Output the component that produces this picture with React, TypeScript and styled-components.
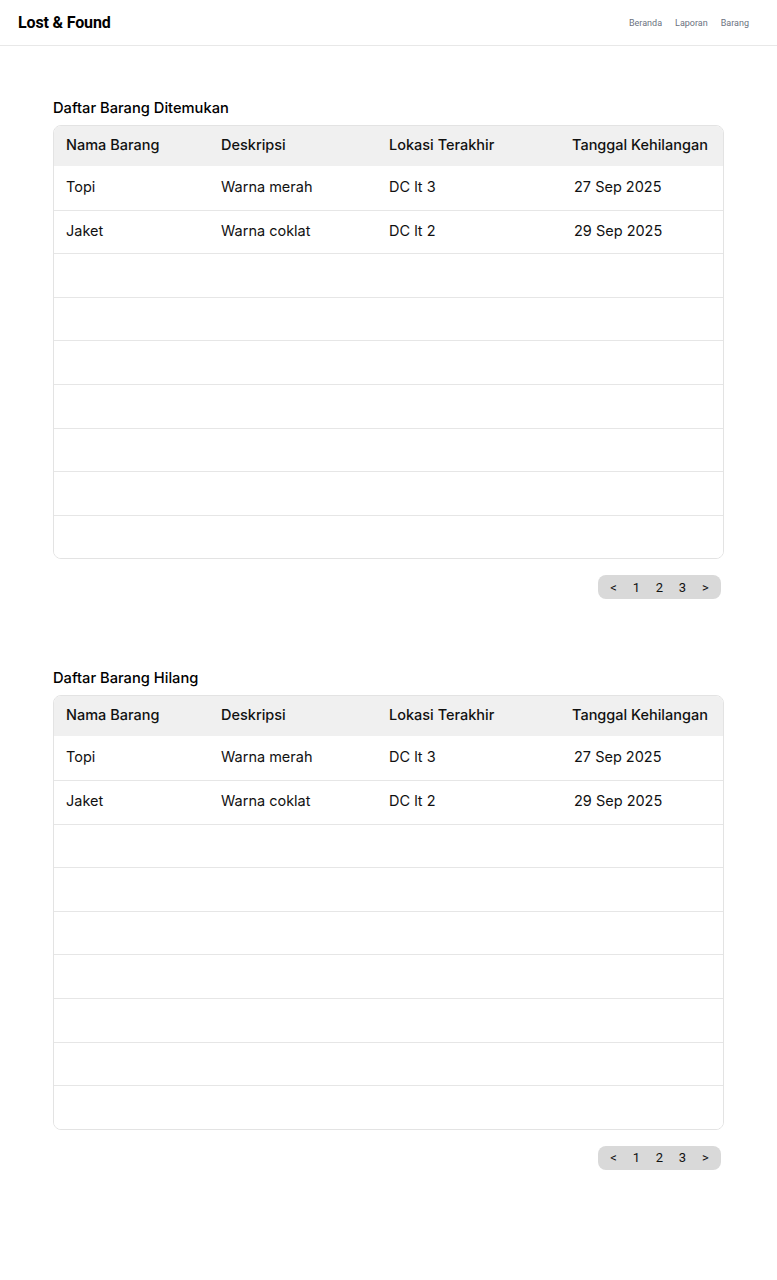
import React from "react";
import styled, { createGlobalStyle } from "styled-components";

const Global = createGlobalStyle`
  html, body { margin: 0; padding: 0; background: #fff; }
  body { font-family: Inter, "Noto Sans", sans-serif; color: #111; }
  * { box-sizing: border-box; }
`;

const Header = styled.header`
  height: 46px;
  border-bottom: 1px solid #e8e8e8;
  display: flex;
  align-items: center;
  justify-content: space-between;
  padding: 0 28px 0 18px;
`;

const Logo = styled.div`
  font-family: Roboto, sans-serif;
  font-weight: 700;
  font-size: 16px;
  color: #000;
  letter-spacing: -0.15px;
`;

const Nav = styled.nav`
  display: flex;
  gap: 13px;
`;

const NavLink = styled.a`
  font-family: Roboto, sans-serif;
  font-size: 9px;
  color: #6b7280;
  text-decoration: none;
`;

const Main = styled.main`
  padding: 53px 53px 0 53px;
  display: flex;
  flex-direction: column;
  gap: 70px;
`;

const Section = styled.section`
  display: flex;
  flex-direction: column;
`;

const Title = styled.h2`
  margin: 0 0 8px 0;
  font-size: 14.7px;
  line-height: 18px;
  font-weight: 500;
  color: #000;
`;

const Table = styled.div`
  border: 1px solid #e3e3e3;
  border-radius: 8px;
  overflow: hidden;
  width: 671px;
`;

const Row = styled.div<{ $head?: boolean }>`
  display: grid;
  grid-template-columns: 155px 168px 183px 1fr;
  height: ${(p) => (p.$head ? "40px" : "43.6px")};
  align-items: center;
  background: ${(p) => (p.$head ? "#f0f0f0" : "#fff")};
  border-top: ${(p) => (p.$head ? "none" : "1px solid #e6e6e6")};
  &:nth-child(2) { border-top: none; }
`;

const Cell = styled.div<{ $head?: boolean; $shift?: number }>`
  padding-left: ${(p) => 12 + (p.$shift ?? 0)}px;
  padding-bottom: 3px;
  font-size: 14.5px;
  font-weight: ${(p) => (p.$head ? 500 : 400)};
  color: #111;
  white-space: nowrap;
`;

const PagerRow = styled.div`
  display: flex;
  justify-content: flex-end;
  width: 668px;
  margin-top: 16px;
`;

const Pager = styled.div`
  display: flex;
  align-items: center;
  height: 24px;
  padding: 0 4px;
  background: #d9d9d9;
  border-radius: 8px;
`;

const PageItem = styled.span`
  font-family: Roboto, sans-serif;
  font-size: 13px;
  color: #111;
  width: 23px;
  text-align: center;
`;

type Item = { name: string; desc: string; loc: string; date: string };

const data: Item[] = [
  { name: "Topi", desc: "Warna merah", loc: "DC lt 3", date: "27 Sep 2025" },
  { name: "Jaket", desc: "Warna coklat", loc: "DC lt 2", date: "29 Sep 2025" },
];

const TOTAL_ROWS = 9;

function ItemTable({ title }: { title: string }) {
  const empties = Array.from({ length: TOTAL_ROWS - data.length });
  return (
    <Section>
      <Title>{title}</Title>
      <Table>
        <Row $head>
          <Cell $head>Nama Barang</Cell>
          <Cell $head>Deskripsi</Cell>
          <Cell $head>Lokasi Terakhir</Cell>
          <Cell $head>Tanggal Kehilangan</Cell>
        </Row>
        {data.map((d) => (
          <Row key={d.name}>
            <Cell>{d.name}</Cell>
            <Cell>{d.desc}</Cell>
            <Cell>{d.loc}</Cell>
            <Cell $shift={2}>{d.date}</Cell>
          </Row>
        ))}
        {empties.map((_, i) => (
          <Row key={i}>
            <Cell />
            <Cell />
            <Cell />
            <Cell />
          </Row>
        ))}
      </Table>
      <PagerRow>
        <Pager>
          <PageItem>&lt;</PageItem>
          <PageItem>1</PageItem>
          <PageItem>2</PageItem>
          <PageItem>3</PageItem>
          <PageItem>&gt;</PageItem>
        </Pager>
      </PagerRow>
    </Section>
  );
}

export default function App() {
  return (
    <>
      <Global />
      <Header>
        <Logo>Lost &amp; Found</Logo>
        <Nav>
          <NavLink>Beranda</NavLink>
          <NavLink>Laporan</NavLink>
          <NavLink>Barang</NavLink>
        </Nav>
      </Header>
      <Main>
        <ItemTable title="Daftar Barang Ditemukan" />
        <ItemTable title="Daftar Barang Hilang" />
      </Main>
    </>
  );
}
